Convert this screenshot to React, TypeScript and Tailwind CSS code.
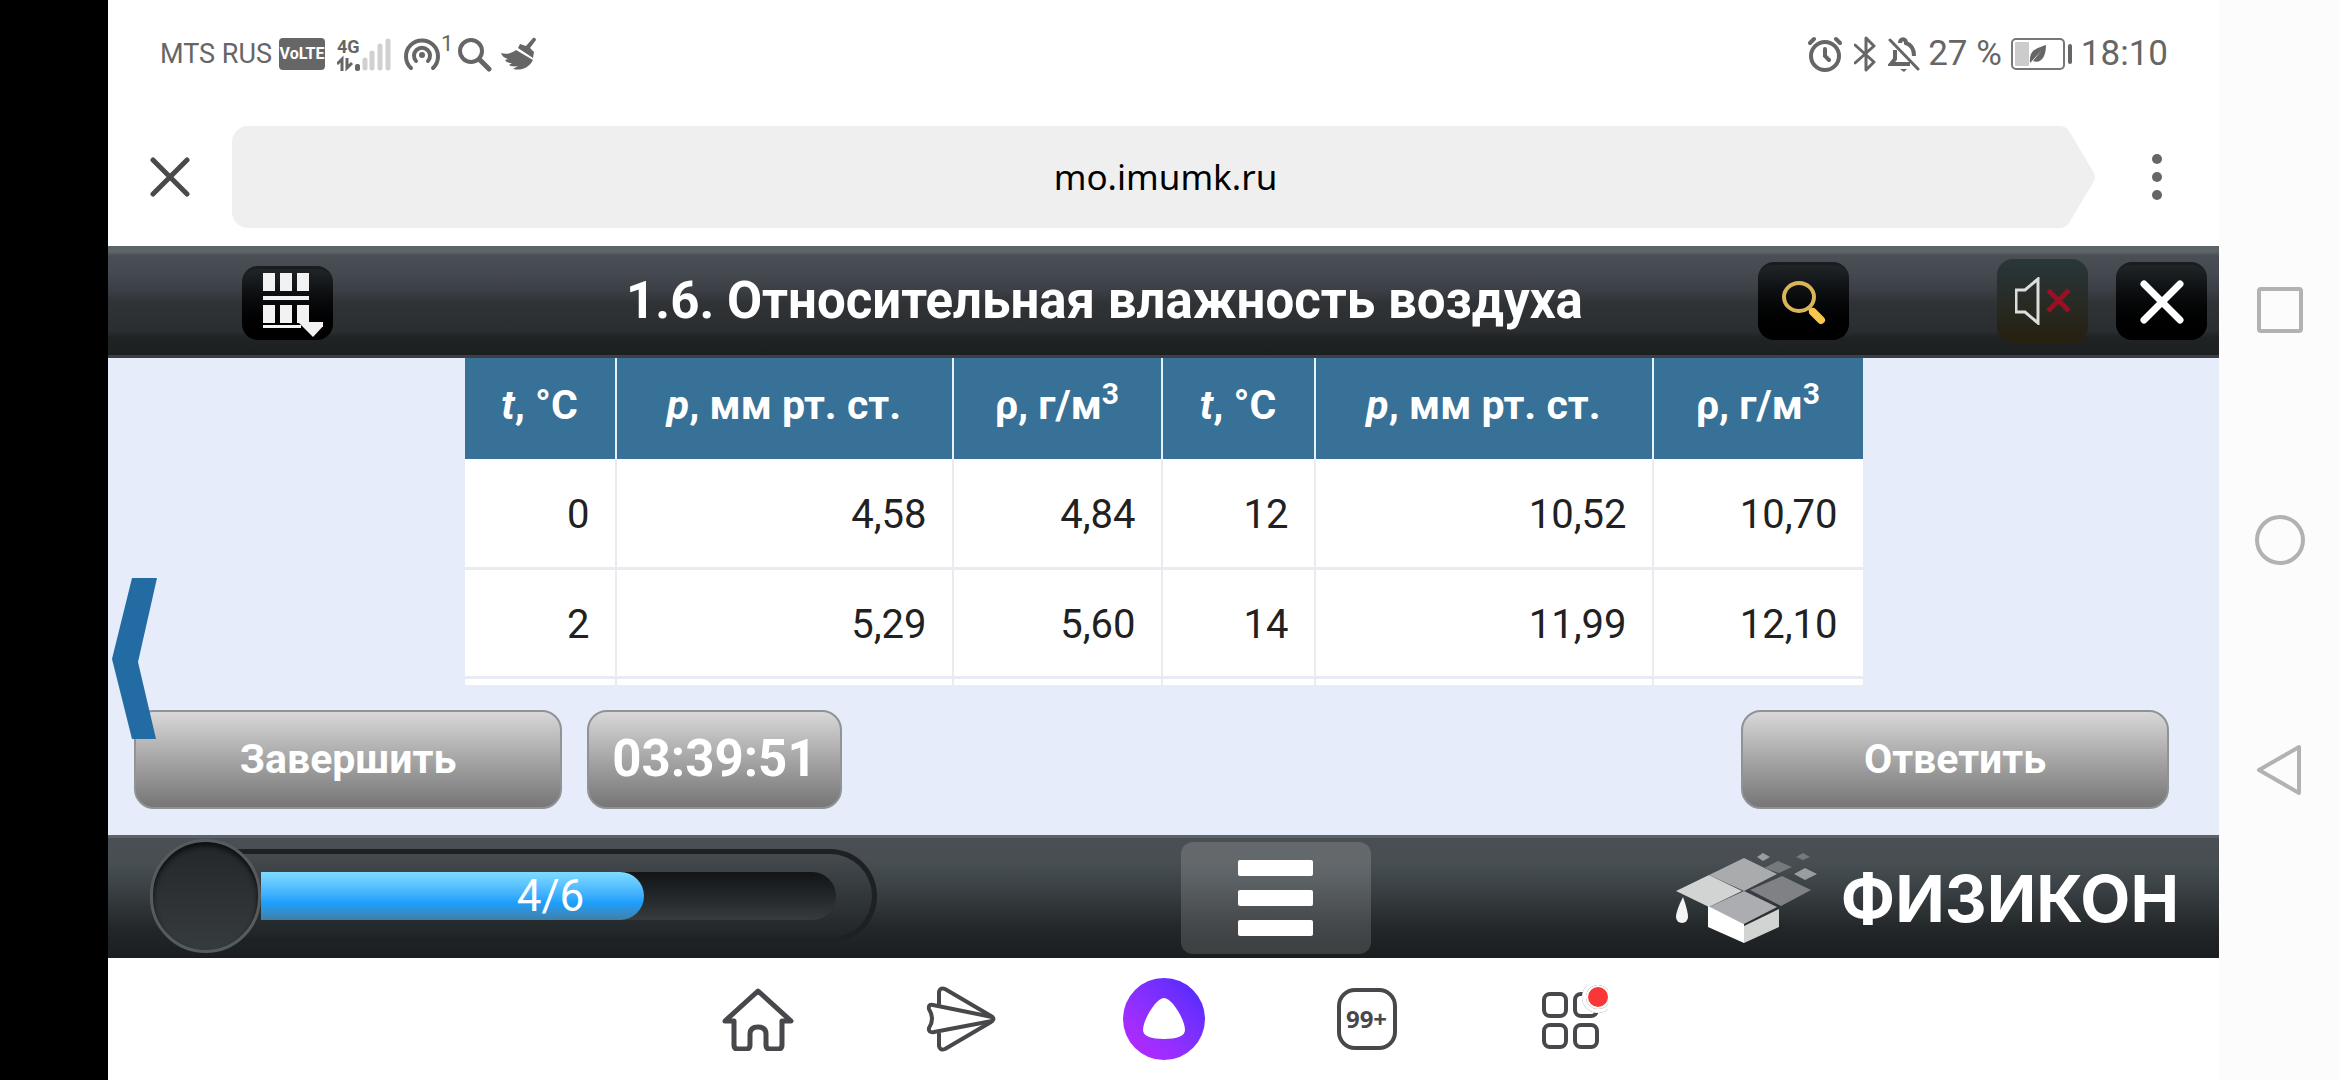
import { ReactNode } from 'react'
import { clsx } from 'clsx'

const columns = [
  { symbol: 't', unit: ', °C', italic: true, width: 'w-[151px]' },
  { symbol: 'p', unit: ', мм рт. ст.', italic: true, width: 'w-[337px]' },
  { symbol: 'ρ', unit: ', г/м', italic: false, sup: '3', width: 'w-[209px]' },
  { symbol: 't', unit: ', °C', italic: true, width: 'w-[153px]' },
  { symbol: 'p', unit: ', мм рт. ст.', italic: true, width: 'w-[338px]' },
  { symbol: 'ρ', unit: ', г/м', italic: false, sup: '3', width: 'w-[210px]' },
]

const rows = [
  ['0', '4,58', '4,84', '12', '10,52', '10,70'],
  ['2', '5,29', '5,60', '14', '11,99', '12,10'],
]

const progress = { current: 4, total: 6 }

function StatusBar() {
  return (
    <div className="flex h-[108px] items-center justify-between pl-[52px] pr-[51px] text-[#666666]">
      <div className="flex items-center">
        <span className="w-[119px] text-[27px] leading-8 whitespace-nowrap">MTS RUS</span>
        <span className="flex h-8 w-[46px] items-center justify-center rounded bg-[#666666] text-base leading-8 font-bold text-white">
          VoLTE
        </span>
        <svg className="ml-3 h-9 w-[54px]" viewBox="0 0 54 36" fill="none">
          <text x="0" y="17" fontFamily="Roboto, sans-serif" fontSize="18" fontWeight="700" fill="#666">
            4G
          </text>
          <path d="M0 28l5-5v12M10 22v10l5-5" stroke="#666" strokeWidth="3" />
          <rect x="18" y="28" width="5" height="7" rx="2" fill="#666" />
          <path d="M28 24v8M35 17v15M43 10v22M51 5v27" stroke="#d0d0d0" strokeWidth="5" strokeLinecap="round" />
        </svg>
        <svg className="ml-3 h-9 w-[38px]" viewBox="0 0 38 36" fill="none" stroke="#666" strokeWidth="4" strokeLinecap="round">
          <path d="M8 32a16 16 0 1 1 22 0" />
          <path d="M13 25a8 8 0 1 1 12 0" />
          <circle cx="19" cy="19" r="3" fill="#666" stroke="none" />
        </svg>
        <span className="mb-5 w-4 text-[22px] leading-6">1</span>
        <svg className="h-9 w-9" viewBox="0 0 36 36" fill="none" stroke="#666" strokeLinecap="round">
          <circle cx="14" cy="15" r="11" strokeWidth="4" />
          <path d="M23 24l9 9" strokeWidth="5" />
        </svg>
        <svg className="ml-2 h-9 w-9" viewBox="0 0 36 36" fill="#666">
          <path d="M0 17c6 2 11 0 15-3l17 10c-4 8-12 11-20 9l5-3c-4 1-8 0-9-1l3-2c-4 0-6-1-7-3l3-1c-4-1-6-3-7-6z" />
          <path d="M17 12l2-4 6 2 7-8c2-1 3 1 3 2l-6 8 4 4-1 6z" />
        </svg>
      </div>
      <div className="flex items-center">
        <svg className="h-9 w-[34px]" viewBox="0 0 34 36" fill="none" stroke="#666" strokeWidth="4" strokeLinecap="round">
          <circle cx="17" cy="20" r="14" />
          <path d="M2 7l4-4M32 7l-4-4M17 13v7l4 4" />
        </svg>
        <svg className="ml-3 h-9 w-[22px]" viewBox="0 0 22 36" fill="none" stroke="#666" strokeWidth="3" strokeLinejoin="round" strokeLinecap="round">
          <path d="M1 9l19 17-8 8V2l8 8L1 27" />
        </svg>
        <svg className="ml-3 h-9 w-8" viewBox="0 0 32 36" fill="none" stroke="#666" strokeWidth="4">
          <path d="M7 14v9l-4 5h19M12 7c0-5 6-5 6 0 6 2 8 6 8 13" />
          <path d="M2 4l28 29" strokeWidth="3" strokeLinecap="round" />
          <path d="M12 33h7l-3 3z" fill="#666" stroke="none" />
        </svg>
        <span className="ml-2 text-[35px] leading-10 whitespace-nowrap">27 %</span>
        <svg className="ml-2 h-[34px] w-[63px]" viewBox="0 0 63 34">
          <rect x="2" y="2" width="52" height="30" rx="4" fill="none" stroke="#777" strokeWidth="2" />
          <rect x="5" y="5" width="14" height="24" rx="1" fill="#ccc" />
          <rect x="58" y="7" width="4" height="20" rx="2" fill="#666" />
          <path d="M20 26c-1-12 4-14 16-18 0 12-5 19-13 16l9-11-11 12z" fill="#666" />
        </svg>
        <time className="ml-2 text-[35px] leading-10">18:10</time>
      </div>
    </div>
  )
}

function AddressBar() {
  return (
    <div className="flex h-[138px] items-center">
      <button aria-label="Закрыть вкладку" className="flex w-[124px] justify-center">
        <svg className="h-10 w-10" viewBox="0 0 40 40" fill="none" stroke="#4a4a4a" strokeWidth="5" strokeLinecap="round">
          <path d="M3 3l34 34M37 3L3 37" />
        </svg>
      </button>
      <button className="flex h-[102px] min-w-0 flex-1">
        <span className="h-full w-4 rounded-l-2xl bg-[#efefef]" />
        <span className="flex h-full flex-1 items-center justify-center bg-[#efefef] pl-6 font-['Noto_Sans',sans-serif] text-[35px] text-black">
          mo.imumk.ru
        </span>
        <svg className="h-full w-9" viewBox="0 0 36 102" fill="#efefef">
          <path d="M0 0Q7 0 10 5L35 47Q37 51 35 55L10 97Q7 102 0 102Z" />
        </svg>
      </button>
      <button aria-label="Меню" className="flex w-[124px] flex-col items-center gap-2">
        <span className="size-[10px] rounded-full bg-[#666666]" />
        <span className="size-[10px] rounded-full bg-[#666666]" />
        <span className="size-[10px] rounded-full bg-[#666666]" />
      </button>
    </div>
  )
}

interface ToolButtonProps {
  label: string
  className?: string
  children: ReactNode
}

function ToolButton({ label, className, children }: ToolButtonProps) {
  return (
    <button
      aria-label={label}
      className={clsx('flex w-[91px] shrink-0 items-center justify-center rounded-2xl', className)}
    >
      {children}
    </button>
  )
}

const darkButton = 'border-t-3 border-[#191d20] bg-linear-to-b from-[#202528] to-black'

function LessonHeader() {
  return (
    <header className="flex h-[112px] items-center border-b-3 border-[#3c4046] bg-[linear-gradient(#5c6367,#5f666a_5%,#4a4f56_9%,#454950_24%,#3c4046_40%,#2f3336_52%,#2a2e31_78%,#1f2324_84%,#1c2021)] pr-3 pl-[134px]">
      <ToolButton label="Содержание" className={clsx('mt-1 h-[74px]', darkButton)}>
        <svg className="h-[66px] w-[70px]" viewBox="0 0 70 66" fill="#f2f2f2">
          <path d="M10 2h12v18H10zM27 2h12v18H27zM44 2h12v18H44zM10 25h46v4H10zM10 34h12v18H10zM27 34h12v18H27zM44 34h12v18H44zM10 54h38v3H10z" />
          <path d="M45 51h29L60 66z" />
        </svg>
      </ToolButton>
      <h1 className="flex-1 pl-[118px] text-center text-[51px] leading-none font-bold whitespace-nowrap text-white">
        1.6. Относительная влажность воздуха
      </h1>
      <ToolButton label="Поиск" className={clsx('h-[78px]', darkButton)}>
        <svg className="size-[46px]" viewBox="0 0 46 46" fill="none" strokeLinecap="round">
          <ellipse cx="18" cy="18" rx="15" ry="14" stroke="#d9b45a" strokeWidth="4" />
          <path d="M28 29l3 3" stroke="#d9b45a" strokeWidth="4" />
          <path d="M32 33l8 8" stroke="#f7c650" strokeWidth="8" />
        </svg>
      </ToolButton>
      <ToolButton label="Звук выключен" className="ml-[148px] h-[84px] bg-linear-to-b from-[#29363b] to-[#26200f]">
        <svg className="h-12 w-14" viewBox="0 0 56 48" fill="none">
          <path d="M1 13h9L23 2v44L10 35H1z" stroke="#dddddd" strokeWidth="3" />
          <path d="M33 13l21 21M54 13L33 34" stroke="#9c0f22" strokeWidth="5" />
        </svg>
      </ToolButton>
      <ToolButton label="Закрыть" className={clsx('ml-7 h-[78px]', darkButton)}>
        <svg className="h-11 w-11" viewBox="0 0 44 44" fill="none" stroke="#fff" strokeWidth="7" strokeLinecap="round">
          <path d="M4 4l36 36M40 4L4 40" />
        </svg>
      </ToolButton>
    </header>
  )
}

function VapourTable() {
  return (
    <div className="mx-auto h-[327px] w-[1398px] overflow-hidden bg-white">
      <table className="w-full table-fixed border-collapse text-[40px] leading-[48px]">
        <thead>
          <tr className="h-[101px] bg-[#387197] text-white">
            {columns.map((col, i) => (
              <th key={i} scope="col" className={clsx('pb-2 text-center text-[41px] font-bold whitespace-nowrap not-last:border-r-2 not-last:border-[#e6f2fb]', col.width)}>
                <span className={clsx(col.italic && 'italic')}>{col.symbol}</span>
                {col.unit}
                {col.sup && <sup className="text-[30px]">{col.sup}</sup>}
              </th>
            ))}
          </tr>
        </thead>
        <tbody>
          {rows.map((row) => (
            <tr key={row[0]} className="h-[109px] border-b-3 border-[#e9ebf1] text-[#212121]">
              {row.map((value, i) => (
                <td key={i} className="pt-1 pr-[25px] text-right not-last:border-r-2 not-last:border-[#e9ebf1]">
                  {value}
                </td>
              ))}
            </tr>
          ))}
          <tr className="h-2">
            {columns.map((_, i) => (
              <td key={i} className="not-last:border-r-2 not-last:border-[#e9ebf1]" />
            ))}
          </tr>
        </tbody>
      </table>
    </div>
  )
}

const greyButton =
  'flex h-[99px] items-center justify-center rounded-[20px] border-2 border-[#909296] bg-linear-to-b from-[#d8d8d8] to-[#767676] font-bold text-white'

function LessonContent() {
  return (
    <section className="relative h-[477px] bg-[#e7ecfa]">
      <VapourTable />
      <div className="flex items-center gap-[25px] pt-[25px] pr-[50px] pl-[26px]">
        <button className={clsx(greyButton, 'w-[428px] text-[41px]')}>Завершить</button>
        <div role="timer" className={clsx(greyButton, 'w-[255px] text-[51px]')}>
          03:39:51
        </div>
        <button className={clsx(greyButton, 'ml-auto w-[428px] text-[41px]')}>Ответить</button>
      </div>
      <button aria-label="Назад" className="absolute top-[220px] left-1">
        <svg className="h-[161px] w-[45px]" viewBox="0 0 45 161" fill="#226ca3">
          <path d="M20 0h25L26 84l18 77H20L0 81z" />
        </svg>
      </button>
    </section>
  )
}

function ProgressMeter() {
  return (
    <div className="mb-1 flex items-center">
      <div className="z-10 h-[114px] w-[111px] shrink-0 rounded-full border-3 border-[#555b5e] bg-linear-to-b from-[#23272a] to-[#363b3e] shadow-[inset_0_4px_5px_#0d0f10]" />
      <div className="-ml-10 flex h-[94px] w-[656px] items-center rounded-r-full border-5 border-l-0 border-[#1d2123] bg-linear-to-b from-[#454b4f] to-[#202426] pl-10">
        <div
          role="progressbar"
          aria-label="Выполнено"
          aria-valuenow={progress.current}
          aria-valuemax={progress.total}
          className="h-12 w-[575px] rounded-r-full bg-linear-to-b from-[#121416] to-[#363b3e]"
        >
          <div
            className="flex h-full items-center justify-end rounded-r-full bg-linear-to-b from-[#7fdcff] via-[#1a9efa] via-65% to-[#3f7fa8] pr-[60px] text-[44px] leading-none text-white"
            style={{ width: `${(progress.current / progress.total) * 100}%` }}
          >
            {progress.current}/{progress.total}
          </div>
        </div>
      </div>
    </div>
  )
}

function Logo() {
  return (
    <div className="flex items-center gap-6">
      <svg className="h-[90px] w-[142px]" viewBox="0 0 142 90">
        <path d="M1 38L34 22 67 38 34 54z" fill="#d2d4d4" />
        <path d="M34 22L69 5 102 21 69 38z" fill="#a9abad" />
        <path d="M34 54L69 38 102 54 69 71z" fill="#abadb0" />
        <path d="M75 37L107 23 136 37 106 53z" fill="#7f8184" />
        <path d="M33 53L69 71V90L33 74z" fill="#ffffff" />
        <path d="M69 73L104 56V74L69 90z" fill="#d2d4d4" />
        <path d="M8 44Q13 58 13 64A6 6 0 0 1 1 64Q1 58 8 44z" fill="#f4f4f4" />
        <path d="M89 15L103 8 117 14 104 20z" fill="#75797c" />
        <path d="M82 4L88 0 95 4 88 8zM119 21L130 15 142 21 130 27z" fill="#9a9da0" />
        <path d="M121 4L128 0 135 4 128 7z" fill="#75797c" />
      </svg>
      <span className="font-['Inter',sans-serif] text-[65px] leading-none font-bold text-white">ФИЗИКОН</span>
    </div>
  )
}

function LessonFooter() {
  return (
    <footer className="flex h-[123px] items-center justify-between border-t-3 border-[#5c6368] bg-[linear-gradient(#4a4f55,#484e52_20%,#3f464a_35%,#2f3437_58%,#23272a_75%,#1a1e20)] pr-10 pl-[42px]">
      <ProgressMeter />
      <button aria-label="Меню урока" className="flex h-[112px] w-[190px] flex-col items-center justify-center gap-[14px] rounded-xl bg-white/15">
        <span className="h-4 w-[75px] rounded-xs bg-white" />
        <span className="h-4 w-[75px] rounded-xs bg-white" />
        <span className="h-4 w-[75px] rounded-xs bg-white" />
      </button>
      <Logo />
    </footer>
  )
}

interface TabProps {
  label: string
  children: ReactNode
}

function Tab({ label, children }: TabProps) {
  return (
    <button aria-label={label} className="flex h-[122px] w-[203px] items-center justify-center">
      {children}
    </button>
  )
}

function BrowserTabs() {
  return (
    <nav className="flex justify-center">
      <Tab label="Домой">
        <svg className="h-16 w-[72px]" viewBox="0 0 72 64" fill="none" stroke="#48484c" strokeWidth="5" strokeLinejoin="round" strokeLinecap="round">
          <path d="M12 34H3L36 4l33 30h-9v24q0 4-4 4h-8q-4 0-4-4V47q0-7-8-7t-8 7v11q0 4-4 4h-8q-4 0-4-4z" />
        </svg>
      </Tab>
      <Tab label="Отправить">
        <svg className="h-[66px] w-[70px]" viewBox="0 0 70 66" fill="none" stroke="#48484c" strokeWidth="4" strokeLinejoin="round" strokeLinecap="round">
          <path d="M13 18V6q1-5 6-3l46 27q5 3 0 6L19 63q-5 2-6-3V48" />
          <path d="M66 31L7 19q-5-1-4 4 6 10 0 19-1 5 5 4L66 35" />
        </svg>
      </Tab>
      <Tab label="Алиса">
        <span className="flex size-[82px] items-center justify-center rounded-full bg-linear-to-tr from-[#bf22fd] to-[#4a26ff]">
          <svg className="h-[42px] w-[42px]" viewBox="0 0 42 42" fill="#fff">
            <path d="M21 0C29 0 42 22 42 32C42 38 34 41 21 41S0 38 0 32C0 22 13 0 21 0Z" />
          </svg>
        </span>
      </Tab>
      <Tab label="Вкладки">
        <span className="flex h-[62px] w-[60px] items-center justify-center rounded-[18px] border-4 border-[#48484c] font-['Noto_Sans',sans-serif] text-2xl font-bold text-[#48484c]">
          99+
        </span>
      </Tab>
      <Tab label="Сервисы">
        <svg className="h-[68px] w-[76px]" viewBox="0 0 76 68" fill="none" stroke="#48484c" strokeWidth="4">
          <rect x="12" y="9" width="22" height="22" rx="6" />
          <rect x="43" y="9" width="22" height="22" rx="6" />
          <rect x="12" y="40" width="22" height="22" rx="6" />
          <rect x="43" y="40" width="22" height="22" rx="6" />
          <circle cx="66" cy="12" r="14" fill="#fff" />
          <circle cx="66" cy="12" r="14" stroke="#fff" />
          <circle cx="66" cy="12" r="10" fill="#fa3737" stroke="none" />
        </svg>
      </Tab>
    </nav>
  )
}

function SystemNav() {
  return (
    <nav className="flex w-[121px] shrink-0 flex-col items-center justify-center gap-[178px] bg-[#fcfcfc]">
      <button aria-label="Недавние">
        <svg className="size-[52px]" viewBox="0 0 52 52" fill="none" stroke="#b2b2b2" strokeWidth="4">
          <rect x="5" y="5" width="42" height="42" rx="2" />
        </svg>
      </button>
      <button aria-label="Главный экран">
        <svg className="size-[52px]" viewBox="0 0 52 52" fill="none" stroke="#b2b2b2" strokeWidth="4">
          <circle cx="26" cy="26" r="23" />
        </svg>
      </button>
      <button aria-label="Назад">
        <svg className="size-[52px]" viewBox="0 0 52 52" fill="none" stroke="#b2b2b2" strokeWidth="4" strokeLinejoin="round">
          <path d="M45 3v46L5 26z" />
        </svg>
      </button>
    </nav>
  )
}

export default function App() {
  return (
    <div className="flex min-h-screen bg-black font-['Roboto',sans-serif]">
      <div className="w-[108px] shrink-0 bg-black" />
      <main className="flex min-w-0 flex-1 flex-col bg-white">
        <StatusBar />
        <AddressBar />
        <LessonHeader />
        <LessonContent />
        <LessonFooter />
        <BrowserTabs />
      </main>
      <SystemNav />
    </div>
  )
}
